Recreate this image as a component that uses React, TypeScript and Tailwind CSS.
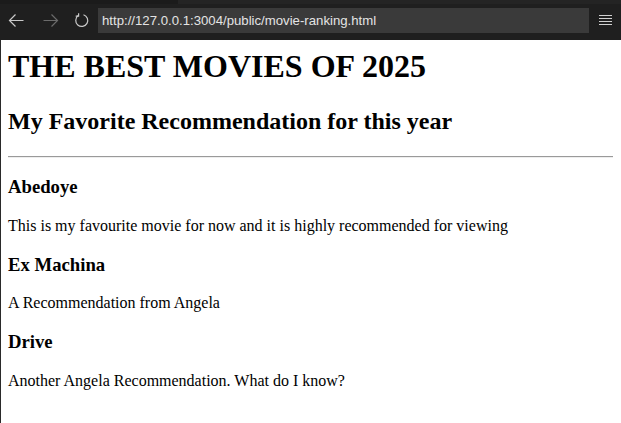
const movies = [
  {
    title: 'Abedoye',
    note: 'This is my favourite movie for now and it is highly recommended for viewing',
  },
  { title: 'Ex Machina', note: 'A Recommendation from Angela' },
  { title: 'Drive', note: 'Another Angela Recommendation. What do I know?' },
]

function BrowserBar() {
  return (
    <div className="flex flex-col h-10 bg-[#1f1f1f] shrink-0">
      <div className="flex h-1">
        <div className="w-[178px] bg-[#1b1b1b]" />
        <div className="flex-1 bg-[#242424]" />
      </div>
      <div className="flex items-start pt-1 pl-2 pr-[9px]">
        {/* Back */}
        <svg width="17" height="25" viewBox="0 0 17 25" className="shrink-0">
          <path d="M1.5 12.5H15.5M7.5 6.5L1.5 12.5L7.5 18.5" fill="none" stroke="#c9c9c9" strokeWidth="1.2" />
        </svg>
        {/* Forward */}
        <svg width="17" height="25" viewBox="0 0 17 25" className="ml-[17px] shrink-0">
          <path d="M1.5 12.5H15.5M9.5 6.5L15.5 12.5L9.5 18.5" fill="none" stroke="#6b6b6b" strokeWidth="1.2" />
        </svg>
        {/* Reload */}
        <svg width="16" height="25" viewBox="0 0 16 25" className="ml-[15px] shrink-0">
          <path
            d="M4.2 7.6A6 6 0 1 0 9.5 6.7"
            fill="none"
            stroke="#c9c9c9"
            strokeWidth="1.2"
          />
          <path d="M4.6 5.2V8.1H1.7" fill="none" stroke="#c9c9c9" strokeWidth="1.2" />
        </svg>
        <div className="ml-2 flex-1 h-[25px] bg-[#3a3a3a] flex items-center pl-1 font-['Liberation_Sans',Arial,sans-serif] text-[13.2px] text-[#e4e4e4]">
          http://127.0.0.1:3004/public/movie-ranking.html
        </div>
        {/* Menu */}
        <div className="ml-[10px] w-[13px] flex flex-col gap-[2px] pt-[7px]">
          <div className="h-px bg-[#d0d0d0]" />
          <div className="h-px bg-[#d0d0d0]" />
          <div className="h-px bg-[#d0d0d0]" />
          <div className="h-px bg-[#d0d0d0]" />
        </div>
      </div>
    </div>
  )
}

export default function App() {
  return (
    <div className="h-[423px] flex flex-col bg-white overflow-hidden">
      <BrowserBar />
      <div className="flex-1 border-l border-[#2a2a2a] pl-[7px] pr-2 text-black font-['Liberation_Serif','Times_New_Roman',serif]">
        <h1 className="mt-2 mb-[22.5px] text-[32px] font-bold leading-[normal]">
          THE BEST MOVIES OF 2025
        </h1>
        <h2 className="mt-[19.92px] mb-[21px] text-[24px] font-bold leading-[normal]">
          My Favorite Recommendation for this year
        </h2>
        <hr className="my-2 h-0 border-t border-b border-t-[#9a9a9a] border-b-[#eeeeee]" />
        {movies.map((movie, i) => (
          <div key={i}>
            <h3 className="my-[18.72px] text-[18.72px] font-bold leading-[normal]">{movie.title}</h3>
            <p className="my-4 text-base leading-[normal]">{movie.note}</p>
          </div>
        ))}
      </div>
    </div>
  )
}
